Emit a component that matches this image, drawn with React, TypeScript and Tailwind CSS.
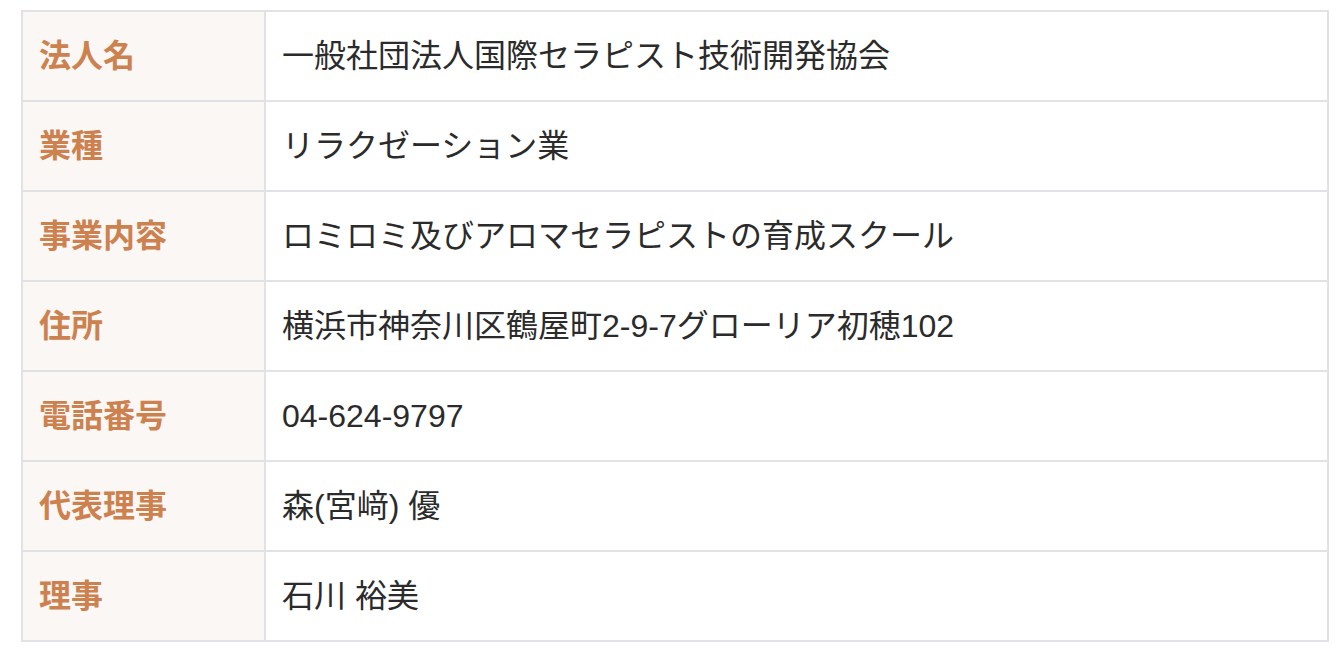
import React from 'react';

const rows: [string, string][] = [
  ['法人名', '一般社団法人国際セラピスト技術開発協会'],
  ['業種', 'リラクゼーション業'],
  ['事業内容', 'ロミロミ及びアロマセラピストの育成スクール'],
  ['住所', '横浜市神奈川区鶴屋町2-9-7グローリア初穂102'],
  ['電話番号', '04-624-9797'],
  ['代表理事', '森(宮﨑) 優'],
  ['理事', '石川 裕美'],
];

export default function App() {
  return (
    <div
      className="bg-white w-[1342px] h-[656px] pt-[10px] pl-[21px]"
      style={{ fontFamily: '"Helvetica Neue", "Liberation Sans", "Noto Sans CJK JP", sans-serif' }}
    >
      <table className="w-[1308px] border-collapse border-2 border-[#e1e2e6]">
        <tbody>
          {rows.map(([label, value]) => (
            <tr key={label} className="h-[90px]">
              <th className="w-[243px] border-2 border-[#e1e2e6] bg-[#fbf7f5] text-left align-middle pl-[16px] text-[32px] font-bold text-[#cd814e]">
                {label}
              </th>
              <td className="border-2 border-[#e1e2e6] align-middle pl-[16px] text-[32px] text-[#2b2b2b]">
                {value}
              </td>
            </tr>
          ))}
        </tbody>
      </table>
    </div>
  );
}
